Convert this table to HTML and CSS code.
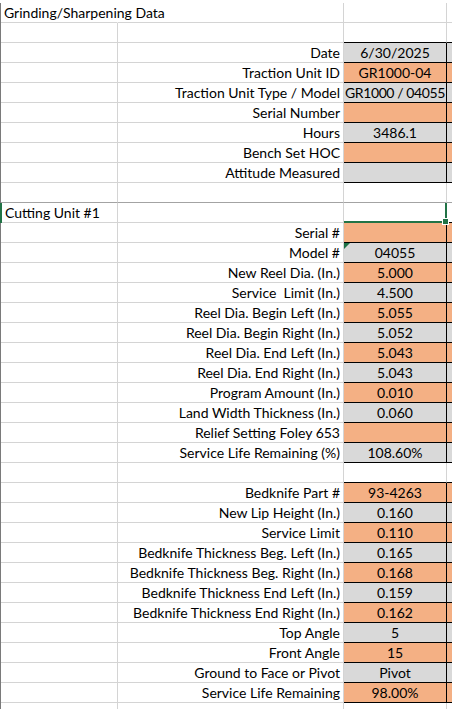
FILE: index.html
```html
<!DOCTYPE html>
<html lang="en">
<head>
  <meta charset="UTF-8">
  <meta name="viewport" content="width=device-width, initial-scale=1.0">
  <title>Grinding/Sharpening Data</title>
  <link rel="stylesheet" href="styles.css">
</head>
<body>
  <div class="sheet">
    <div class="row">
      <div class="cell a spill">Grinding/Sharpening Data</div>
      <div class="cell b"></div><div class="cell c"></div><div class="cell d"></div>
    </div>
    <div class="row">
      <div class="cell a"></div><div class="cell b"></div>
      <div class="cell c top"></div><div class="cell d top"></div>
    </div>
    <div class="row">
      <div class="cell a"></div><div class="cell b">Date</div>
      <div class="cell c gr">6/30/2025</div><div class="cell d gr"></div>
    </div>
    <div class="row">
      <div class="cell a"></div><div class="cell b">Traction Unit ID</div>
      <div class="cell c or">GR1000-04</div><div class="cell d or"></div>
    </div>
    <div class="row">
      <div class="cell a"></div><div class="cell b">Traction Unit Type / Model</div>
      <div class="cell c gr tight">GR1000 / 04055</div><div class="cell d gr"></div>
    </div>
    <div class="row">
      <div class="cell a"></div><div class="cell b">Serial Number</div>
      <div class="cell c or"></div><div class="cell d or"></div>
    </div>
    <div class="row">
      <div class="cell a"></div><div class="cell b">Hours</div>
      <div class="cell c gr">3486.1</div><div class="cell d gr"></div>
    </div>
    <div class="row">
      <div class="cell a"></div><div class="cell b">Bench Set HOC</div>
      <div class="cell c or"></div><div class="cell d or"></div>
    </div>
    <div class="row">
      <div class="cell a"></div><div class="cell b">Attitude Measured</div>
      <div class="cell c gr"></div><div class="cell d gr"></div>
    </div>
    <div class="row split">
      <div class="cell a"></div><div class="cell b"></div><div class="cell c"></div><div class="cell d"></div>
    </div>
    <div class="row active">
      <div class="cell a">Cutting Unit #1</div><div class="cell b"></div>
      <div class="cell c sel"></div><div class="cell d top"></div>
    </div>
    <div class="row">
      <div class="cell a"></div><div class="cell b">Serial #</div>
      <div class="cell c or"></div><div class="cell d or"></div>
    </div>
    <div class="row">
      <div class="cell a"></div><div class="cell b">Model #</div>
      <div class="cell c gr flag">04055</div><div class="cell d gr"></div>
    </div>
    <div class="row">
      <div class="cell a"></div><div class="cell b">New Reel Dia. (In.)</div>
      <div class="cell c or">5.000</div><div class="cell d or"></div>
    </div>
    <div class="row">
      <div class="cell a"></div><div class="cell b">Service &nbsp;Limit (In.)</div>
      <div class="cell c gr">4.500</div><div class="cell d gr"></div>
    </div>
    <div class="row">
      <div class="cell a"></div><div class="cell b">Reel Dia. Begin Left (In.)</div>
      <div class="cell c or">5.055</div><div class="cell d or"></div>
    </div>
    <div class="row">
      <div class="cell a"></div><div class="cell b">Reel Dia. Begin Right (In.)</div>
      <div class="cell c gr">5.052</div><div class="cell d gr"></div>
    </div>
    <div class="row">
      <div class="cell a"></div><div class="cell b">Reel Dia. End Left (In.)</div>
      <div class="cell c or">5.043</div><div class="cell d or"></div>
    </div>
    <div class="row">
      <div class="cell a"></div><div class="cell b">Reel Dia. End Right (In.)</div>
      <div class="cell c gr">5.043</div><div class="cell d gr"></div>
    </div>
    <div class="row">
      <div class="cell a"></div><div class="cell b">Program Amount (In.)</div>
      <div class="cell c or">0.010</div><div class="cell d or"></div>
    </div>
    <div class="row">
      <div class="cell a"></div><div class="cell b">Land Width Thickness (In.)</div>
      <div class="cell c gr">0.060</div><div class="cell d gr"></div>
    </div>
    <div class="row">
      <div class="cell a"></div><div class="cell b">Relief Setting Foley 653</div>
      <div class="cell c or"></div><div class="cell d or"></div>
    </div>
    <div class="row">
      <div class="cell a"></div><div class="cell b">Service Life Remaining (%)</div>
      <div class="cell c gr">108.60%</div><div class="cell d gr"></div>
    </div>
    <div class="row">
      <div class="cell a"></div><div class="cell b"></div>
      <div class="cell c top"></div><div class="cell d top"></div>
    </div>
    <div class="row">
      <div class="cell a"></div><div class="cell b">Bedknife Part #</div>
      <div class="cell c or">93-4263</div><div class="cell d or"></div>
    </div>
    <div class="row">
      <div class="cell a"></div><div class="cell b">New Lip Height (In.)</div>
      <div class="cell c gr">0.160</div><div class="cell d gr"></div>
    </div>
    <div class="row">
      <div class="cell a"></div><div class="cell b">Service Limit</div>
      <div class="cell c or">0.110</div><div class="cell d or"></div>
    </div>
    <div class="row">
      <div class="cell a"></div><div class="cell b">Bedknife Thickness Beg. Left (In.)</div>
      <div class="cell c gr">0.165</div><div class="cell d gr"></div>
    </div>
    <div class="row">
      <div class="cell a"></div><div class="cell b">Bedknife Thickness Beg. Right (In.)</div>
      <div class="cell c or">0.168</div><div class="cell d or"></div>
    </div>
    <div class="row">
      <div class="cell a"></div><div class="cell b">Bedknife Thickness End Left (In.)</div>
      <div class="cell c gr">0.159</div><div class="cell d gr"></div>
    </div>
    <div class="row">
      <div class="cell a"></div><div class="cell b">Bedknife Thickness End Right (In.)</div>
      <div class="cell c or">0.162</div><div class="cell d or"></div>
    </div>
    <div class="row">
      <div class="cell a"></div><div class="cell b">Top Angle</div>
      <div class="cell c gr">5</div><div class="cell d gr"></div>
    </div>
    <div class="row">
      <div class="cell a"></div><div class="cell b">Front Angle</div>
      <div class="cell c or">15</div><div class="cell d or"></div>
    </div>
    <div class="row">
      <div class="cell a"></div><div class="cell b">Ground to Face or Pivot</div>
      <div class="cell c gr">Pivot</div><div class="cell d gr"></div>
    </div>
    <div class="row">
      <div class="cell a"></div><div class="cell b">Service Life Remaining</div>
      <div class="cell c or">98.00%</div><div class="cell d or"></div>
    </div>
    <div class="row">
      <div class="cell a"></div><div class="cell b"></div><div class="cell c"></div><div class="cell d"></div>
    </div>
  </div>
</body>
</html>
```

FILE: styles.css
```css
body {
  margin: 0;
  overflow: hidden;
  background: #ffffff;
  font-family: Lato, 'Open Sans', sans-serif;
  font-size: 14px;
  color: #000000;
}
.sheet {
  margin-top: 3px;
  width: 452px;
  overflow: hidden;
}
.row {
  display: flex;
  height: 20px;
  border-left: 1px solid #7a7a7a;
}
.row.active {
  border-left: 2px solid #217346;
}
.cell {
  box-sizing: border-box;
  height: 20px;
  padding: 0 3px;
  line-height: 20px;
  white-space: nowrap;
  border-right: 1px solid #d4d4d4;
  border-bottom: 1px solid #d4d4d4;
}
.a {
  width: 117px;
  flex: none;
}
.row.active .a {
  width: 116px;
}
.spill {
  overflow: visible;
  border-right-color: transparent;
}
.b {
  width: 226px;
  flex: none;
  text-align: right;
}
.c {
  width: 103px;
  flex: none;
  padding: 0;
  overflow: hidden;
  text-align: center;
}
.tight {
  letter-spacing: -0.4px;
}
.d {
  flex: 1;
}
.split .cell {
  border-bottom-color: #a3a3a3;
}
.top {
  border-bottom-color: #000000;
}
.gr,
.or {
  border-right-color: #000000;
  border-bottom-color: #000000;
}
.gr {
  background: #d9d9d9;
}
.or {
  background: #f4b084;
}
.d.top,
.d.gr,
.d.or {
  border-right: none;
}
.flag {
  position: relative;
}
.flag::before {
  content: '';
  position: absolute;
  left: 0;
  top: 0;
  border-top: 6px solid #1e7145;
  border-right: 6px solid transparent;
}
.sel {
  position: relative;
  overflow: visible;
  border-right: 2px solid #217346;
  border-bottom: 2px solid #217346;
}
.sel::after {
  content: '';
  position: absolute;
  right: -4px;
  bottom: -4px;
  width: 5px;
  height: 5px;
  background: #217346;
  border: 1px solid #ffffff;
}
```
